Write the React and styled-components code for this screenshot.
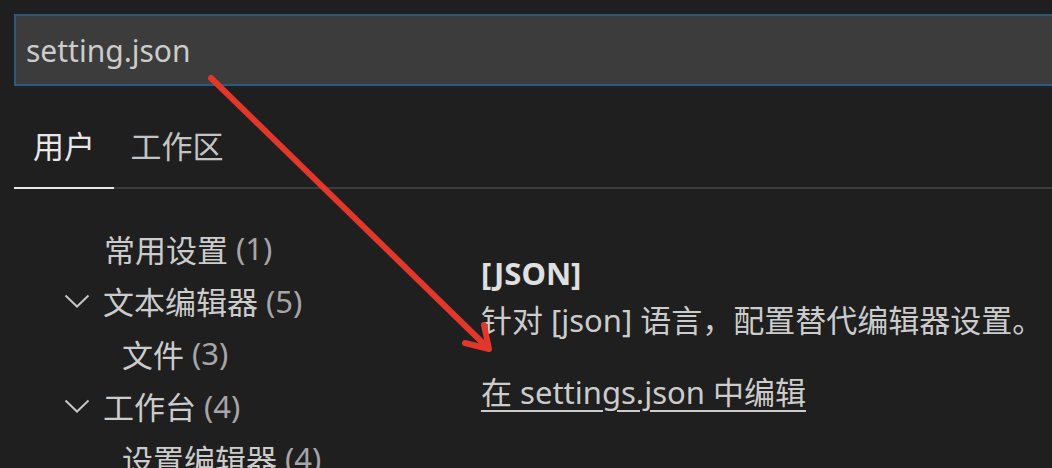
import React from 'react';
import styled, { createGlobalStyle } from 'styled-components';

const Global = createGlobalStyle`
  html, body {
    margin: 0;
    padding: 0;
    background: #1f1f1f;
    overflow: hidden;
  }
  body {
    font-family: "Noto Sans", "Noto Sans CJK SC", sans-serif;
  }
`

const Page = styled.div`
  position: relative;
  width: 1052px;
  height: 468px;
  background: #1f1f1f;
  color: #cccccc;
  padding: 14px 0 0 14px;
  box-sizing: border-box;
  overflow: hidden;
`

const SearchBox = styled.div`
  height: 72px;
  margin-right: -40px;
  box-sizing: border-box;
  background: #3c3c3c;
  border: 2px solid #2a5a82;
  display: flex;
  align-items: center;
  padding-left: 10px;
  font-size: 30px;
  color: #cccccc;
`

const Tabs = styled.div`
  display: flex;
  height: 101px;
  margin-right: -20px;
  border-bottom: 2px solid #3c3c3c;
`

const Tab = styled.div`
  width: ${p => p.$w}px;
  display: flex;
  align-items: center;
  justify-content: center;
  font-size: 31px;
  padding-top: 16px;
  color: ${p => (p.$active ? '#e7e7e7' : '#c4c4c4')};
  border-bottom: 2px solid ${p => (p.$active ? '#e7e7e7' : 'transparent')};
  margin-bottom: -2px;
`

const Body = styled.div`
  display: flex;
`

const Tree = styled.div`
  width: 467px;
  padding-top: 33px;
  display: flex;
  flex-direction: column;
`

const Row = styled.div`
  height: 52.5px;
  display: flex;
  align-items: center;
  padding-left: ${p => p.$indent}px;
  font-size: 31px;
  color: #cccccc;
  white-space: nowrap;
`

const Chevron = styled.svg`
  width: 26px;
  height: 14px;
  margin-right: 13px;
  flex-shrink: 0;
`

const Count = styled.span`
  color: #a6a6a6;
  margin-left: 8px;
`

const Detail = styled.div`
  padding-top: 64px;
  display: flex;
  flex-direction: column;
  white-space: nowrap;
`

const Title = styled.div`
  font-size: 31px;
  font-weight: 700;
  color: #e0e0e0;
  line-height: 40px;
`

const Desc = styled.div`
  font-size: 31px;
  color: #cccccc;
  line-height: 42px;
  margin-top: 6px;
`

const Link = styled.a`
  margin-top: 30px;
  font-size: 31px;
  line-height: 42px;
  color: #cccccc;
  text-decoration: underline;
  text-underline-offset: 6px;
  text-decoration-thickness: 2px;
`

const Overlay = styled.svg`
  position: absolute;
  left: 0;
  top: 0;
  pointer-events: none;
`

function TreeRow({ indent, chevron, label, count }) {
  return (
    <Row $indent={indent}>
      {chevron && (
        <Chevron viewBox="0 0 26 14">
          <path d="M1.5 1.5 L13 12.5 L24.5 1.5" fill="none" stroke="#c5c5c5" strokeWidth="2" />
        </Chevron>
      )}
      {label}
      <Count>({count})</Count>
    </Row>
  );
}

export default function App() {
  return (
    <>
      <Global />
      <Page>
        <SearchBox>setting.json</SearchBox>
        <Tabs>
          <Tab $w={100} $active>用户</Tab>
          <Tab $w={126}>工作区</Tab>
        </Tabs>
        <Body>
          <Tree>
            <TreeRow indent={90} label="常用设置" count={1} />
            <TreeRow indent={50} chevron label="文本编辑器" count={5} />
            <TreeRow indent={108} label="文件" count={3} />
            <TreeRow indent={50} chevron label="工作台" count={4} />
            <TreeRow indent={108} label="设置编辑器" count={4} />
          </Tree>
          <Detail>
            <Title>[JSON]</Title>
            <Desc>针对 [json] 语言，配置替代编辑器设置。</Desc>
            <Link>在 settings.json 中编辑</Link>
          </Detail>
        </Body>
        <Overlay width="1052" height="468" viewBox="0 0 1052 468">
          <g stroke="#e2372b" strokeWidth="6" strokeLinecap="round" strokeLinejoin="round" fill="none">
            <path d="M211 78 L488 348" />
            <path d="M484 325 L489 349 L465 343" />
          </g>
        </Overlay>
      </Page>
    </>
  );
}
